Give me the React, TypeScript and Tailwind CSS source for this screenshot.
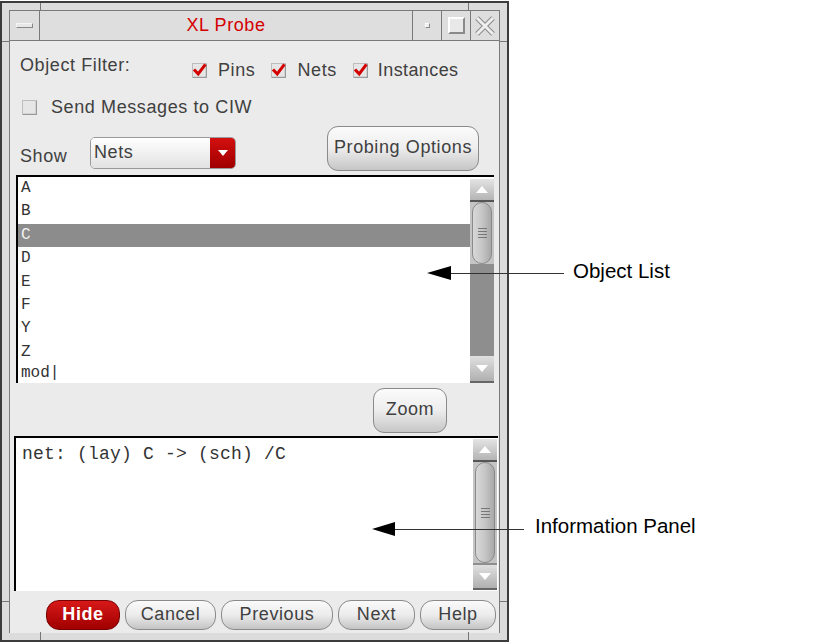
import React from "react";

const ui = { fontFamily: '"Liberation Sans", Arial, sans-serif' };
const mono = { fontFamily: '"Liberation Mono", "Courier New", monospace' };

const CheckBox = ({ checked }: { checked?: boolean }) => (
  <svg width="15" height="15" viewBox="0 0 15 15" className="shrink-0">
    <rect x="0.5" y="0.5" width="14" height="14" fill="#e6e6e6" stroke="#bdbdbd" />
    <path d="M1 14.5 H14.5 V1" fill="none" stroke="#9a9a9a" strokeWidth="1.5" />
    {checked && (
      <path d="M3 7.5 L6.2 11 L12.5 2.5" fill="none" stroke="#d40000" strokeWidth="3" strokeLinecap="square" />
    )}
  </svg>
);

const ScrollBar = ({ thumb, track }: { thumb: number; track: number }) => (
  <div className="w-[24px] flex flex-col shrink-0">
    <div className="h-[23px] bg-gradient-to-b from-[#e4e4e4] to-[#b4b4b4] border-b-2 border-[#555] flex items-center justify-center">
      <div className="w-0 h-0 border-l-[6px] border-r-[6px] border-b-[7px] border-l-transparent border-r-transparent border-b-white" />
    </div>
    <div className="bg-[#c4c4c4] px-[2px]" style={{ height: thumb }}>
      <div className="h-full rounded-full border border-[#8a8a8a] bg-gradient-to-r from-[#d8d8d8] via-[#c6c6c6] to-[#a8a8a8] flex flex-col items-center justify-center gap-[2px]">
        <div className="w-[9px] h-px bg-[#777]" />
        <div className="w-[9px] h-px bg-[#777]" />
        <div className="w-[9px] h-px bg-[#777]" />
        <div className="w-[9px] h-px bg-[#777]" />
      </div>
    </div>
    <div className="bg-[#8e8e8e]" style={{ height: track }} />
    <div className="flex-1 bg-gradient-to-b from-[#e0e0e0] to-[#b0b0b0] border-b-2 border-[#666] flex items-center justify-center">
      <div className="w-0 h-0 border-l-[6px] border-r-[6px] border-t-[7px] border-l-transparent border-r-transparent border-t-white" />
    </div>
  </div>
);

const PillButton = ({ label, w, red }: { label: string; w: number; red?: boolean }) => (
  <div
    className={
      red
        ? "h-[30px] rounded-[13px] border border-[#700] bg-gradient-to-b from-[#d81818] to-[#a00000] text-white font-bold flex items-center justify-center text-[18px] pb-[2px]"
        : "h-[30px] rounded-[13px] border border-[#8a8a8a] bg-gradient-to-b from-[#fafafa] via-[#ececec] to-[#c4c4c4] text-[#404040] flex items-center justify-center text-[18px] tracking-[0.6px] pb-[2px]"
    }
    style={{ width: w }}
  >
    {label}
  </div>
);

const items = ["A", "B", "C", "D", "E", "F", "Y", "Z"];

export default function App() {
  return (
    <div className="relative w-[831px] h-[644px] bg-white overflow-hidden" style={ui}>
      {/* window */}
      <div className="mt-[1px] w-[509px] h-[641px] border-2 border-[#3c3c3c] bg-[#dcdcdc] p-[7px] relative">
        <div className="absolute left-[38px] top-0 w-px h-[8px] bg-[#777]" />
        <div className="absolute left-[466px] top-0 w-px h-[8px] bg-[#777]" />
        <div className="absolute left-[38px] bottom-0 w-px h-[8px] bg-[#777]" />
        <div className="absolute left-[466px] bottom-0 w-px h-[8px] bg-[#777]" />
        <div className="absolute left-0 top-[38px] w-[8px] h-px bg-[#777]" />
        <div className="absolute right-0 top-[38px] w-[8px] h-px bg-[#777]" />
        <div className="absolute left-0 bottom-[38px] w-[8px] h-px bg-[#777]" />
        <div className="absolute right-0 bottom-[38px] w-[8px] h-px bg-[#777]" />
        <div className="h-full border border-[#7a7a7a] flex flex-col">
          {/* title bar */}
          <div className="h-[30px] flex border-b border-[#7a7a7a] bg-[#dedede] shrink-0">
            <div className="w-[30px] border-r border-[#7a7a7a] flex items-center justify-center">
              <div className="w-[17px] h-[5px] bg-[#e8e8e8] border border-[#888] border-t-[#f4f4f4] border-l-[#f4f4f4]" />
            </div>
            <div className="flex-1 flex items-center justify-center text-[18px] tracking-[0.6px] text-[#d40000]">
              XL Probe
            </div>
            <div className="w-[29px] border-l border-[#7a7a7a] flex items-center justify-center">
              <div className="w-[5px] h-[5px] bg-[#eee] border border-[#888] border-t-white border-l-white" />
            </div>
            <div className="w-[29px] border-l border-[#7a7a7a] flex items-center justify-center">
              <div className="w-[17px] h-[17px] bg-[#e8e8e8] border-2 border-[#8a8a8a] border-t-white border-l-white" />
            </div>
            <div className="w-[29px] border-l border-[#7a7a7a] flex items-center justify-center">
              <svg width="22" height="22" viewBox="0 0 22 22">
                <path d="M3 3 L19 19 M19 3 L3 19" stroke="#8a8a8a" strokeWidth="5" />
                <path d="M3 3 L19 19 M19 3 L3 19" stroke="#efefef" strokeWidth="3" />
              </svg>
            </div>
          </div>

          {/* content */}
          <div className="flex-1 bg-[#ebebeb] flex flex-col text-[#404040] text-[18px] tracking-[0.6px]">
            <div className="mt-[13px] h-[22px] flex items-start pl-[10px] leading-[22px]">
              <div className="w-[172px]">Object Filter:</div>
              <div className="mt-[5px] flex items-center h-[22px]">
                <CheckBox checked />
                <span className="ml-[11px]">Pins</span>
                <span className="ml-[16px]"><CheckBox checked /></span>
                <span className="ml-[11px]">Nets</span>
                <span className="ml-[16px]"><CheckBox checked /></span>
                <span className="ml-[10px] tracking-[0.4px]">Instances</span>
              </div>
            </div>

            <div className="mt-[20px] h-[22px] flex items-center pl-[12px] leading-[22px]">
              <CheckBox />
              <span className="ml-[14px]">Send Messages to CIW</span>
            </div>

            <div className="mt-[8px] h-[45px] flex items-start pl-[10px] pr-[20px]">
              <div className="w-[70px] mt-[19px] leading-[22px]">Show</div>
              <div className="mt-[11px] h-[32px] w-[146px] flex rounded-[5px] border border-[#9a9a9a] overflow-hidden">
                <div className="flex-1 bg-gradient-to-b from-white to-[#e2e2e2] pl-[3px] leading-[28px]">Nets</div>
                <div className="w-[25px] bg-gradient-to-b from-[#d41010] to-[#a00000] flex items-center justify-center">
                  <div className="w-0 h-0 border-l-[5px] border-r-[5px] border-t-[6px] border-l-transparent border-r-transparent border-t-white" />
                </div>
              </div>
              <div className="ml-auto w-[152px] h-[45px] rounded-[11px] border border-[#8a8a8a] bg-gradient-to-b from-[#fbfbfb] via-[#ededed] to-[#c6c6c6] flex items-center justify-center pb-[2px]">
                Probing Options
              </div>
            </div>

            {/* object list */}
            <div className="mt-[4px] ml-[6px] mr-[5px] h-[208px] bg-white border-t-2 border-l-2 border-black flex overflow-hidden" style={mono}>
              <div className="flex-1 flex flex-col text-[16px] text-[#333] tracking-normal">
                {items.map((it) => (
                  <div
                    key={it}
                    className={
                      it === "C"
                        ? "h-[23.4px] shrink-0 leading-[23px] pl-[3px] bg-[#8c8c8c] text-[#f2f2f2]"
                        : "h-[23.4px] shrink-0 leading-[23px] pl-[3px]"
                    }
                  >
                    {it}
                  </div>
                ))}
                <div className="h-[18px] shrink-0 leading-[18px] pl-[3px]">mod|</div>
              </div>
              <div className="pt-[2px] flex">
                <ScrollBar thumb={62} track={92} />
              </div>
            </div>

            <div className="h-[53px] flex justify-end pr-[52px] shrink-0">
              <div className="mt-[5px] w-[74px] h-[45px] rounded-[11px] border border-[#8a8a8a] bg-gradient-to-b from-[#fbfbfb] via-[#ededed] to-[#c6c6c6] flex items-center justify-center pb-[2px]">
                Zoom
              </div>
            </div>

            {/* info panel */}
            <div className="ml-[4px] mr-[1px] h-[155px] bg-white border-t-2 border-l-2 border-black flex shrink-0">
              <div className="flex-1 pl-[6px] pt-[5px] text-[18px] leading-[22px] text-[#333] tracking-[0.2px] whitespace-pre" style={mono}>
                net: (lay) C -&gt; (sch) /C
              </div>
              <div className="pt-[1px] pb-[1px] pr-[1px] flex">
                <ScrollBar thumb={101} track={2} />
              </div>
            </div>

            <div className="h-[42px] flex items-start pl-[36px] gap-[5px] pt-[9px] shrink-0">
              <PillButton label="Hide" w={74} red />
              <PillButton label="Cancel" w={91} />
              <PillButton label="Previous" w={112} />
              <PillButton label="Next" w={77} />
              <PillButton label="Help" w={76} />
            </div>
          </div>
        </div>
      </div>

      {/* callouts */}
      <svg className="absolute left-0 top-0 pointer-events-none" width="831" height="644">
        <path d="M427 273 L451 266 L451 280 Z" fill="#000" />
        <line x1="451" y1="273.5" x2="564" y2="273.5" stroke="#333" strokeWidth="1" />
        <path d="M372 529 L395 522 L395 536 Z" fill="#000" />
        <line x1="395" y1="529.5" x2="524" y2="529.5" stroke="#333" strokeWidth="1" />
      </svg>
      <div className="absolute left-[573px] top-[259px] text-[20.5px] leading-[24px] text-black">Object List</div>
      <div className="absolute left-[535px] top-[514px] text-[20.5px] leading-[24px] text-black">Information Panel</div>
    </div>
  );
}
